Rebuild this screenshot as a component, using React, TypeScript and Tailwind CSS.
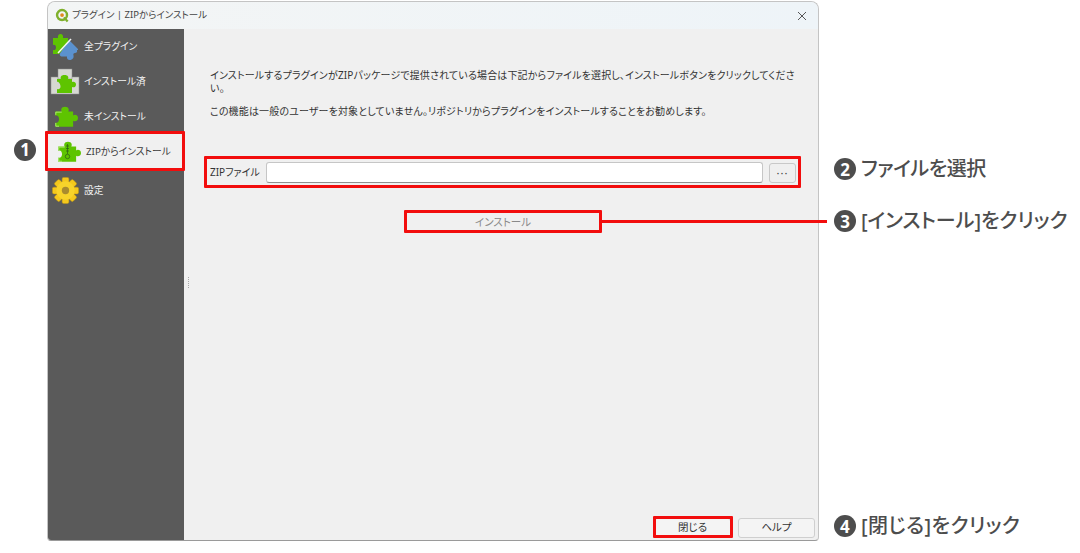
import type { ReactNode } from "react";

const PUZZLE =
  "M3 7h6c-1-1.500-.500-4.500 3-4.500s4 3 3 4.500h4.500v3.500c1.500-1 4.500-.500 4.500 2.500s-3 3.500-4.500 2.500V21H3v-4c2 .800 3.500-.800 3.500-3S5 10 3 11Z";

function Puzzle({ fill = "#5ec400", className = "" }: { fill?: string; className?: string }) {
  return (
    <svg viewBox="0 0 24 24" className={className}>
      <path d={PUZZLE} fill={fill} />
      <path d="M3.500 10V7.500H9M3.500 17.500v3h3" fill="none" stroke="#b6ee7e" strokeWidth="0.800" />
    </svg>
  );
}

function AllIcon() {
  return (
    <svg viewBox="0 0 30 30" className="w-[30px] h-[30px]">
      <path d="M3 6h5c-.500-2 .500-4 2.500-4S13.500 4 13 6h5v7l-9 9H3v-4c2 .500 3-.500 3-2.500S5 12.500 3 13Z" fill="#5ec400" />
      <path d="M19 8l9 9v1h-1c.500 2-.500 3-2 3s-2 1-1.500 2.500c.500 2-.500 4-3 4.500s-4-1.500-3.500-3.500H12c-1.500 0-3-1.500-2-3Z" fill="#5b92cf" />
      <path d="M8 21L21 7" stroke="#f4f4f4" strokeWidth="1.500" />
    </svg>
  );
}

function InstalledIcon() {
  return (
    <svg viewBox="0 0 30 30" className="w-[30px] h-[30px]">
      <rect x="1" y="10" width="28" height="17" fill="#d6d8d2" stroke="#8b8b8b" strokeWidth="0.500" />
      <rect x="8" y="2" width="14" height="10" fill="#d6d8d2" stroke="#8b8b8b" strokeWidth="0.500" />
      <path d="M7 12h4c-.800-1.500-.300-4 3.500-4s4.300 2.500 3.500 4h4v3c1.500-.800 4-.300 4 2.500s-2.500 3.300-4 2.500v6H7v-4c1.500.800 3.500 0 3.500-2.500S8.500 14.200 7 15Z" fill="#5ec400" />
    </svg>
  );
}

function ZipIcon() {
  return (
    <div className="relative w-[26px] h-[26px]">
      <Puzzle className="w-[26px] h-[26px]" />
      <svg viewBox="0 0 26 26" className="absolute inset-0 w-[26px] h-[26px]">
        <path d="M12.500 5v10M11 7h3M11 9.500h3M11 12h3" stroke="#2c5a18" strokeWidth="0.700" fill="none" />
        <circle cx="12.500" cy="17.500" r="2.200" stroke="#2c5a18" strokeWidth="0.700" fill="none" />
      </svg>
    </div>
  );
}

function GearIcon() {
  return (
    <svg viewBox="0 0 28 28" className="w-[27px] h-[27px]">
      {[0, 45, 90, 135].map((a) => (
        <rect key={a} x="10.500" y="0.500" width="7" height="27" rx="1.500" fill="#f4c81c" stroke="#c79a10" strokeWidth="0.500" transform={`rotate(${a} 14 14)`} />
      ))}
      <circle cx="14" cy="14" r="9.500" fill="#f7d32a" />
      <circle cx="14" cy="14" r="3.800" fill="#a98b2e" />
    </svg>
  );
}

function SideItem({ icon, label, active = false, last = false }: { icon: ReactNode; label: string; active?: boolean; last?: boolean }) {
  return (
    <div
      className={`flex items-center shrink-0 ${last ? "h-[43px] pl-[2px]" : "h-[35px]"} ${
        active ? "bg-[#f0f0f0] text-[#3a3a3a] pl-[5px]" : "text-[#f2f2f2]"
      } ${!active && !last ? "pl-[2px]" : ""}`}
    >
      <span className={`flex items-center justify-center ${active ? "w-[30px] mr-[3px]" : "w-[30px] mr-[4px]"}`}>{icon}</span>
      <span className="mt-[2px] text-[9.750px] whitespace-nowrap">{label}</span>
    </div>
  );
}

function Num({ n }: { n: number }) {
  return (
    <span className="flex items-center justify-center rounded-full bg-[#4d4d4d] text-white font-bold shrink-0 w-[22px] h-[22px] text-[17px]">
      {n}
    </span>
  );
}

function Callout({ n, className, children }: { n: number; className: string; children: ReactNode }) {
  return (
    <div className={`absolute flex items-center gap-[5px] text-[20px] font-medium leading-none text-[#4d4d4d] whitespace-nowrap ${className}`}>
      <Num n={n} />
      <span>{children}</span>
    </div>
  );
}

export default function App() {
  return (
    <div className="relative w-[1080px] h-[553px] bg-white overflow-hidden [font-feature-settings:'palt'] font-['Noto_Sans','Noto_Sans_CJK_JP',sans-serif]">
      {/* ダイアログ本体 */}
      <div className="ml-[47px] pt-px w-[772px]">
        <div className="h-[540px] flex flex-col rounded-t-[8px] rounded-b-[4px] border border-[#c4c4c4] border-b-[#9a9a9a] overflow-hidden bg-[#f0f0f0]">
          {/* タイトルバー */}
          <div className="h-[27px] shrink-0 flex items-center pl-[7px] pr-[11px] bg-gradient-to-r from-[#f3f5f5] to-[#eef4f8]">
            <svg viewBox="0 0 16 16" className="w-[15px] h-[15px] mr-[2px]">
              <circle cx="7.500" cy="7.500" r="5.300" fill="none" stroke="#7fb02c" strokeWidth="2.600" />
              <circle cx="7.500" cy="7.500" r="2" fill="#e08a1e" />
              <path d="M9.500 10l4 4.500" stroke="#7fb02c" strokeWidth="2.400" />
            </svg>
            <span className="text-[9.500px] text-[#444444]">プラグイン | ZIPからインストール</span>
            <svg viewBox="0 0 10 10" className="ml-auto w-[10px] h-[10px]">
              <path d="M1 1l8 8M9 1l-8 8" stroke="#444444" strokeWidth="0.900" />
            </svg>
          </div>

          <div className="flex-1 flex min-h-0">
            {/* サイドバー */}
            <div className="w-[136px] shrink-0 bg-[#5a5a5a] flex flex-col">
              <SideItem icon={<AllIcon />} label="全プラグイン" />
              <SideItem icon={<InstalledIcon />} label="インストール済" />
              <SideItem icon={<Puzzle className="w-[26px] h-[26px]" />} label="未インストール" />
              <SideItem icon={<ZipIcon />} label="ZIPからインストール" active />
              <SideItem icon={<GearIcon />} label="設定" last />
            </div>

            {/* スプリッター */}
            <div className="w-[8px] shrink-0 flex flex-col items-center justify-center gap-[1px] pb-[4px]">
              {[0, 1, 2, 3, 4, 5].map((i) => (
                <span key={i} className="w-[1px] h-[1px] bg-[#a8a8a8]" />
              ))}
            </div>

            {/* メイン */}
            <div className="flex-1 min-w-0 flex flex-col pl-[18px] pr-[3px] pb-[2px]">
              <div className="pt-[40px] w-[585px] text-[10px] leading-[13px] tracking-[0.15px] text-[#333333]">
                <p>インストールするプラグインがZIPパッケージで提供されている場合は下記からファイルを選択し、インストールボタンをクリックしてください。</p>
                <p className="mt-[10px]">この機能は一般のユーザーを対象としていません。リポジトリからプラグインをインストールすることをお勧めします。</p>
              </div>

              <div className="mt-[44px] flex items-center h-[21px] pr-[19px]">
                <span className="w-[56px] shrink-0 text-[10px] text-[#333333] whitespace-nowrap">ZIPファイル</span>
                <div className="flex-1 h-[21px] bg-white border border-[#c6c6c6] border-b-[#8f8f8f] rounded-[3px]" />
                <button className="ml-[6px] w-[27px] h-[20px] bg-[#efefef] border border-[#c8c8c8] rounded-[3px] text-[11px] tracking-[1px] leading-none text-[#444444]">
                  ···
                </button>
              </div>

              <div className="mt-[31px] ml-[198px] w-[190px] h-[17px] flex items-center justify-center text-[10.500px] text-[#8a8a8a]">
                インストール
              </div>

              <div className="mt-auto flex justify-end gap-[7px] text-[10.500px] text-[#333333]">
                <button className="w-[77px] h-[20px] bg-[#f4f4f4] border border-[#cfcfcf] rounded-[3px]">閉じる</button>
                <button className="w-[77px] h-[20px] bg-[#f4f4f4] border border-[#cfcfcf] rounded-[3px]">ヘルプ</button>
              </div>
            </div>
          </div>
        </div>
      </div>

      {/* 注釈の赤枠 */}
      <div className="absolute left-[45px] top-[131px] w-[140px] h-[40px] border-[3px] border-[#f20d0d] rounded-[1px]" />
      <div className="absolute left-[204px] top-[156px] w-[597px] h-[32px] border-[3px] border-[#f20d0d] rounded-[1px]" />
      <div className="absolute left-[404px] top-[210px] w-[198px] h-[23px] border-[3px] border-[#f20d0d] rounded-[1px]" />
      <div className="absolute left-[653px] top-[516px] w-[80px] h-[22px] border-[3px] border-[#f20d0d] rounded-[1px]" />
      <div className="absolute left-[602px] top-[220px] w-[225px] h-[3px] bg-[#f20d0d]" />

      <div className="absolute left-[14px] top-[139px]">
        <Num n={1} />
      </div>
      <Callout n={2} className="left-[834px] top-[158px] tracking-[-0.4px]">ファイルを選択</Callout>
      <Callout n={3} className="left-[834px] top-[210px]">[インストール]をクリック</Callout>
      <Callout n={4} className="left-[834px] top-[515px] tracking-[0.4px]">[閉じる]をクリック</Callout>
    </div>
  );
}
